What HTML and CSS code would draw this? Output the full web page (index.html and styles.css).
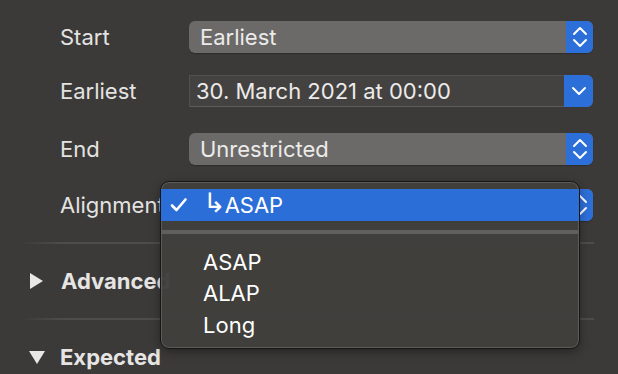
FILE: index.html
```html
<!DOCTYPE html>
<html lang="en">
<head>
  <meta charset="UTF-8">
  <title>Task Inspector</title>
  <link rel="stylesheet" href="styles.css">
</head>
<body>
  <div class="inspector">
    <div class="row row-start">
      <div class="label">Start</div>
      <div class="popup">
        <span class="popup-text">Earliest</span>
        <span class="popup-arrows">
          <svg width="16" height="22" viewBox="0 0 16 22"><path d="M2 8 L8 2 L14 8 M2 14 L8 20 L14 14" fill="none" stroke="#fff" stroke-width="2" stroke-linecap="round" stroke-linejoin="round"/></svg>
        </span>
      </div>
    </div>

    <div class="row row-earliest">
      <div class="label">Earliest</div>
      <div class="datefield">
        <span class="date-text">30. March 2021 at 00:00</span>
        <span class="date-arrow">
          <svg width="16" height="10" viewBox="0 0 16 10"><path d="M2 2 L8 8 L14 2" fill="none" stroke="#fff" stroke-width="2" stroke-linecap="round" stroke-linejoin="round"/></svg>
        </span>
      </div>
    </div>

    <div class="row row-end">
      <div class="label">End</div>
      <div class="popup">
        <span class="popup-text">Unrestricted</span>
        <span class="popup-arrows">
          <svg width="16" height="22" viewBox="0 0 16 22"><path d="M2 8 L8 2 L14 8 M2 14 L8 20 L14 14" fill="none" stroke="#fff" stroke-width="2" stroke-linecap="round" stroke-linejoin="round"/></svg>
        </span>
      </div>
    </div>

    <div class="row row-align">
      <div class="label">Alignment</div>
      <div class="popup">
        <!-- title is hidden while the menu is open -->
        <span class="popup-text is-open">↳ASAP</span>
        <span class="popup-arrows">
          <svg width="16" height="22" viewBox="0 0 16 22"><path d="M2 8 L8 2 L14 8 M2 14 L8 20 L14 14" fill="none" stroke="#fff" stroke-width="2" stroke-linecap="round" stroke-linejoin="round"/></svg>
        </span>
      </div>
    </div>

    <div class="divider divider-first"></div>

    <div class="section">
      <span class="disclosure closed"></span>
      <span class="section-title">Advanced</span>
    </div>

    <div class="divider"></div>

    <div class="section section-open">
      <span class="disclosure open"></span>
      <span class="section-title">Expected</span>
    </div>
  </div>

  <!-- open popup menu of Alignment -->
  <div class="menu" role="menu">
    <div class="menu-item selected">
      <span class="check">
        <svg width="18" height="16" viewBox="0 0 18 16"><path d="M2 8.5 L6.5 13 L15.5 2.5" fill="none" stroke="#fff" stroke-width="2.6" stroke-linecap="round" stroke-linejoin="round"/></svg>
      </span>
      <span class="item-text"><span class="hook">↳</span>ASAP</span>
    </div>
    <div class="menu-sep"></div>
    <div class="menu-item"><span class="check"></span><span class="item-text">ASAP</span></div>
    <div class="menu-item"><span class="check"></span><span class="item-text">ALAP</span></div>
    <div class="menu-item"><span class="check"></span><span class="item-text">Long</span></div>
  </div>
</body>
</html>
```

FILE: styles.css
```css
/* Base */
*, *::before, *::after {
  box-sizing: border-box;
}
html, body {
  margin: 0;
  padding: 0;
  height: 100%;
  overflow: hidden;
}
body {
  background-color: #3b3a38;
  color: #e4e3e2;
  font-family: Inter, "Liberation Sans", "DejaVu Sans", sans-serif;
  font-size: 22px;
  position: relative;
}

/* Inspector rows */
.inspector {
  padding-top: 21px;
}
.row {
  display: flex;
  align-items: center;
  height: 32px;
  padding-left: 60px;
}
.row-earliest { margin-top: 22px; }
.row-end { margin-top: 26px; }
.row-align { margin-top: 24px; }

.label {
  width: 129px;
  flex: none;
  white-space: nowrap;
  overflow: hidden;
}

/* Popup buttons */
.popup {
  width: 404px;
  height: 32px;
  display: flex;
  border-radius: 6px;
  background-color: #6b6a68;
  overflow: hidden;
  box-shadow: 0 1px 1px rgba(0, 0, 0, 0.25);
}
.popup-text {
  flex: 1;
  padding-left: 11px;
  line-height: 32px;
  color: #ecebea;
}
.popup-text.is-open {
  visibility: hidden;
}
.popup-arrows {
  width: 27px;
  flex: none;
  background-color: #2d6fd9;
  display: flex;
  align-items: center;
  justify-content: center;
}

/* Date field */
.datefield {
  width: 404px;
  height: 32px;
  display: flex;
  background-color: #444240;
  border: 1px solid #53514f;
  border-bottom-color: #5e5c5a;
  border-radius: 0 6px 6px 0;
}
.date-text {
  flex: 1;
  padding-left: 6px;
  line-height: 30px;
  color: #ecebea;
}
.date-arrow {
  width: 29px;
  flex: none;
  margin: -1px -1px -1px 0;
  background-color: #2d6fd9;
  border-radius: 0 6px 6px 0;
  display: flex;
  align-items: center;
  justify-content: center;
}

/* Dividers and sections */
.divider {
  height: 2px;
  margin: 0 24px 0 20px;
  background: linear-gradient(to right, rgba(80, 79, 77, 0), #4d4c4a 40px, #4d4c4a);
}
.divider-first {
  margin-top: 21px;
}
.section {
  display: flex;
  align-items: center;
  height: 74px;
  padding-left: 30px;
  font-weight: 700;
}
.section-open {
  height: 54px;
  padding-top: 20px;
}
.section-title {
  margin-left: 18px;
  color: #e6e5e4;
}
.disclosure {
  width: 0;
  height: 0;
}
.disclosure.closed {
  border-top: 8px solid transparent;
  border-bottom: 8px solid transparent;
  border-left: 13px solid #e8e7e6;
}
.disclosure.open {
  margin-left: -1px;
  border-left: 8px solid transparent;
  border-right: 8px solid transparent;
  border-top: 13px solid #e8e7e6;
  margin-right: -3px;
}

/* Open popup menu (overlay) */
.menu {
  position: absolute;
  left: 160px;
  top: 181px;
  width: 420px;
  height: 168px;
  padding: 7px 0;
  background-color: rgba(64, 63, 61, 0.97);
  border: 1px solid #161616;
  border-radius: 9px;
  box-shadow: inset 0 0 0 1px #5c5b59, 0 3px 10px rgba(0, 0, 0, 0.35);
  color: #fff;
}
.menu-item {
  display: flex;
  align-items: center;
  height: 31.5px;
}
.menu-item.selected {
  height: 32px;
  background-color: #2b6ed8;
}
.check {
  width: 42px;
  flex: none;
  padding-left: 9px;
  display: flex;
  align-items: center;
}
.hook {
  font-family: "DejaVu Sans", sans-serif;
  font-size: 27px;
  line-height: 22px;
  letter-spacing: -2px;
  margin-right: 1px;
  vertical-align: 1px;
}
.menu-sep {
  height: 4px;
  margin: 9px 0 12px;
  background-color: #605f5d;
}
```
